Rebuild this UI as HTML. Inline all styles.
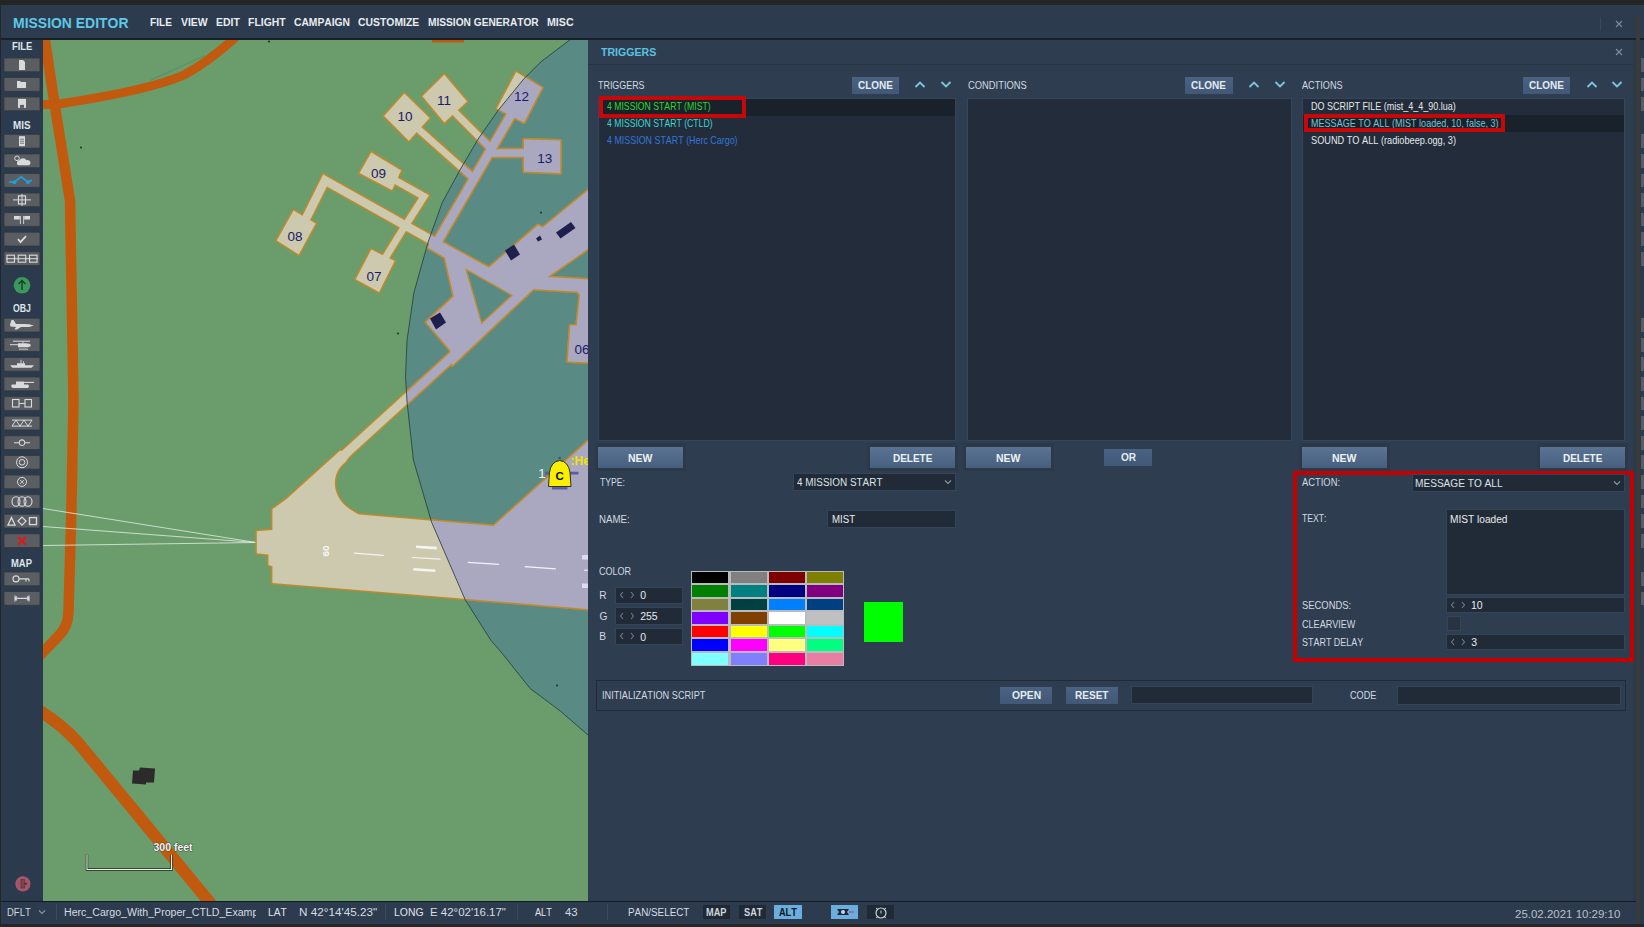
<!DOCTYPE html>
<html><head><meta charset="utf-8"><style>
html,body{margin:0;padding:0;width:1644px;height:927px;overflow:hidden;background:#2e3e50;}
body{position:relative;font-family:"Liberation Sans",sans-serif;}
.b{position:absolute;box-sizing:border-box;}
.t{position:absolute;white-space:pre;line-height:1;font-kerning:none;transform-origin:0 0;}
svg{display:block;}
</style></head><body>
<div class="b" style="left:0.00px;top:0.00px;width:1644.00px;height:5.00px;background:#252525;"></div>
<div class="b" style="left:0.00px;top:5.00px;width:1644.00px;height:32.50px;background:#2c3b4e;"></div>
<div class="b" style="left:0.00px;top:37.50px;width:1644.00px;height:2.00px;background:#18212b;"></div>
<div class="b" style="left:0.00px;top:39.50px;width:43.00px;height:861.50px;background:#2b3a4d;"></div>
<div class="b" style="left:588.00px;top:39.50px;width:1048.00px;height:861.50px;background:#2e3e50;"></div>
<div class="b" style="left:1632.50px;top:39.50px;width:11.50px;height:887.50px;background:#2c3a48;"></div>
<div class="b" style="left:1635.80px;top:16.00px;width:3.80px;height:911.00px;background:#383a3d;"></div>
<div class="b" style="left:0.00px;top:901.00px;width:1636.00px;height:1.00px;background:#141c25;"></div>
<div class="b" style="left:0.00px;top:902.00px;width:1636.00px;height:22.00px;background:#2c3b4e;"></div>
<div class="b" style="left:0.00px;top:924.00px;width:1644.00px;height:3.00px;background:#262626;"></div>
<div class="b" style="left:0.00px;top:5.00px;width:1.00px;height:918.50px;background:#22282e;"></div>
<span class="t" style="left:13.07px;top:17.00px;font-size:13.95px;color:#5ec8e6;font-weight:bold;">MISSION EDITOR</span>
<span class="t" style="left:149.52px;top:17.00px;font-size:11.05px;color:#e8ecf0;font-weight:bold;transform:scaleX(0.9138);">FILE</span>
<span class="t" style="left:180.53px;top:17.00px;font-size:11.05px;color:#e8ecf0;font-weight:bold;transform:scaleX(0.9451);">VIEW</span>
<span class="t" style="left:215.90px;top:17.00px;font-size:11.05px;color:#e8ecf0;font-weight:bold;transform:scaleX(0.9463);">EDIT</span>
<span class="t" style="left:248.10px;top:17.00px;font-size:11.05px;color:#e8ecf0;font-weight:bold;transform:scaleX(0.9456);">FLIGHT</span>
<span class="t" style="left:294.28px;top:17.00px;font-size:11.05px;color:#e8ecf0;font-weight:bold;transform:scaleX(0.9297);">CAMPAIGN</span>
<span class="t" style="left:358.07px;top:17.00px;font-size:11.05px;color:#e8ecf0;font-weight:bold;transform:scaleX(0.9413);">CUSTOMIZE</span>
<span class="t" style="left:428.12px;top:17.00px;font-size:11.05px;color:#e8ecf0;font-weight:bold;transform:scaleX(0.9202);">MISSION GENERATOR</span>
<span class="t" style="left:547.09px;top:17.00px;font-size:11.05px;color:#e8ecf0;font-weight:bold;transform:scaleX(0.9633);">MISC</span>
<div class="b" style="left:1600.00px;top:17.00px;width:1.00px;height:14.00px;background:#3a4a5c;"></div>
<svg class="b" style="left:1614px;top:19.3px" width="10" height="10"><path d="M2,2 L8,8 M8,2 L2,8" stroke="#7f8c9b" stroke-width="1.1"/></svg>
<svg class="b" style="left:1614px;top:46.8px" width="10" height="10"><path d="M2,2 L8,8 M8,2 L2,8" stroke="#7f8c9b" stroke-width="1.1"/></svg>
<svg class="b" style="left:0;top:0" width="43" height="901"><rect x="4" y="58.0" width="36" height="13.8" rx="1" fill="#5a5e63" stroke="#33373c" stroke-width="0.8"/><g transform="translate(22,64.9)"><path d="M-3,-5 h4 l2,2 v8 h-6z" fill="#d9dadb"/></g><rect x="4" y="77.5" width="36" height="13.8" rx="1" fill="#5a5e63" stroke="#33373c" stroke-width="0.8"/><g transform="translate(22,84.4)"><path d="M-5,-3.5 h3 l1,1 h5 v6 h-9z" fill="#d9dadb"/></g><rect x="4" y="97.0" width="36" height="13.8" rx="1" fill="#5a5e63" stroke="#33373c" stroke-width="0.8"/><g transform="translate(22,103.9)"><path d="M-4,-5 h8 v9 h-8z" fill="#d9dadb"/><rect x="-2" y="1" width="4" height="3" fill="#5a5e63"/></g><rect x="4" y="134.3" width="36" height="13.8" rx="1" fill="#5a5e63" stroke="#33373c" stroke-width="0.8"/><g transform="translate(22,141.2)"><path d="M-3,-5 h6 v10 h-6z" fill="#d9dadb"/><path d="M-2,-2 h4 M-2,0 h4 M-2,2 h4" stroke="#5a5e63" stroke-width="0.8"/></g><rect x="4" y="153.9" width="36" height="13.8" rx="1" fill="#5a5e63" stroke="#33373c" stroke-width="0.8"/><g transform="translate(22,160.8)"><circle cx="-5" cy="-2.5" r="2.3" fill="none" stroke="#d9dadb" stroke-width="1"/><path d="M-4,4.5 a2.8,2.8 0 0 1 1.5,-5 a4,4 0 0 1 7,0 a2.8,2.8 0 0 1 2.5,5z" fill="#d9dadb"/></g><rect x="4" y="173.5" width="36" height="13.8" rx="1" fill="#5a5e63" stroke="#33373c" stroke-width="0.8"/><g transform="translate(22,180.4)"><path d="M-13,1.6 L-7.6,1.8 L-1,-3.5 L6,1.8 L10,-0.4" fill="none" stroke="#1e9fd8" stroke-width="1.7"/><circle cx="-7.6" cy="1.8" r="2" fill="#1e9fd8"/><circle cx="6" cy="1.8" r="2" fill="#1e9fd8"/></g><rect x="4" y="193.0" width="36" height="13.8" rx="1" fill="#5a5e63" stroke="#33373c" stroke-width="0.8"/><g transform="translate(22,199.9)"><rect x="-3.5" y="-4" width="7" height="8" fill="none" stroke="#d9dadb" stroke-width="1.2"/><path d="M-9,0 h18 M0,-6 v12" stroke="#d9dadb" stroke-width="1"/></g><rect x="4" y="212.6" width="36" height="13.8" rx="1" fill="#5a5e63" stroke="#33373c" stroke-width="0.8"/><g transform="translate(22,219.5)"><path d="M-8,-3.5 h5.8 v3.5 h-5.8z M2.2,-3.5 h5.8 v3.5 h-5.8z" fill="#d9dadb"/><path d="M-1.6,-3.5 v8 M1.6,-3.5 v8" stroke="#d9dadb" stroke-width="0.9"/></g><rect x="4" y="232.2" width="36" height="13.8" rx="1" fill="#5a5e63" stroke="#33373c" stroke-width="0.8"/><g transform="translate(22,239.1)"><path d="M-4,0 L-1.5,3 L4,-3" fill="none" stroke="#d9dadb" stroke-width="1.8"/></g><rect x="4" y="251.8" width="36" height="13.8" rx="1" fill="#5a5e63" stroke="#33373c" stroke-width="0.8"/><g transform="translate(22,258.7)"><rect x="-15" y="-3.5" width="7.5" height="7" fill="none" stroke="#d9dadb" stroke-width="1.1"/><rect x="-3.75" y="-3.5" width="7.5" height="7" fill="none" stroke="#d9dadb" stroke-width="1.1"/><rect x="7.5" y="-3.5" width="7.5" height="7" fill="none" stroke="#d9dadb" stroke-width="1.1"/><path d="M-16,0 h32" stroke="#d9dadb" stroke-width="1"/></g><rect x="4" y="318.2" width="36" height="13.8" rx="1" fill="#5a5e63" stroke="#33373c" stroke-width="0.8"/><g transform="translate(22,325.1)"><path d="M-12,-0.5 L-10.5,-5 L-8.5,-5 L-6,-1 L3,-1.2 L7,-0.8 L12,0.5 L7,1.8 L-1,2 L-5,4.5 L-7.5,4.5 L-6,2 L-11.5,1.5z" fill="#d9dadb"/></g><rect x="4" y="337.8" width="36" height="13.8" rx="1" fill="#5a5e63" stroke="#33373c" stroke-width="0.8"/><g transform="translate(22,344.7)"><path d="M-9,-3.5 h17" stroke="#d9dadb" stroke-width="1"/><path d="M-12,0 h8" stroke="#d9dadb" stroke-width="1"/><path d="M-4,-1.5 h8 q4,0 5,2 q-1,2 -5,2 h-8z" fill="#d9dadb"/><path d="M-3,4.5 h9 M1,-3.5 v2" stroke="#d9dadb" stroke-width="0.9"/></g><rect x="4" y="357.4" width="36" height="13.8" rx="1" fill="#5a5e63" stroke="#33373c" stroke-width="0.8"/><g transform="translate(22,364.3)"><path d="M-12,1 h24 l-2.5,2.5 h-19z M-5,-1 h8 v2 h-8z" fill="#d9dadb"/><path d="M-1,-4.5 v3.5 M1.5,-3 v2" stroke="#d9dadb" stroke-width="0.9"/></g><rect x="4" y="377.0" width="36" height="13.8" rx="1" fill="#5a5e63" stroke="#33373c" stroke-width="0.8"/><g transform="translate(22,383.9)"><path d="M-10,0.5 h16 q2,1.5 0,3.5 h-15 q-3,-1.5 -1,-3.5z M-6,-2.5 h8 v3 h-8z" fill="#d9dadb"/><path d="M2,-1.5 h10" stroke="#d9dadb" stroke-width="1.1"/></g><rect x="4" y="396.6" width="36" height="13.8" rx="1" fill="#5a5e63" stroke="#33373c" stroke-width="0.8"/><g transform="translate(22,403.5)"><rect x="-9.5" y="-4" width="6.5" height="7.5" fill="none" stroke="#d9dadb" stroke-width="1.1"/><rect x="3" y="-4" width="6.5" height="7.5" fill="none" stroke="#d9dadb" stroke-width="1.1"/><path d="M-3,0 h6" stroke="#d9dadb" stroke-width="1"/></g><rect x="4" y="416.2" width="36" height="13.8" rx="1" fill="#5a5e63" stroke="#33373c" stroke-width="0.8"/><g transform="translate(22,423.1)"><path d="M-10,3 L-6,-3 L-2,3 L2,-3 L6,3 L10,-3 M-10,3 h20 M-10,-3 h20" fill="none" stroke="#d9dadb" stroke-width="1"/></g><rect x="4" y="435.8" width="36" height="13.8" rx="1" fill="#5a5e63" stroke="#33373c" stroke-width="0.8"/><g transform="translate(22,442.7)"><circle cx="0" cy="0" r="2.8" fill="none" stroke="#d9dadb" stroke-width="1.1"/><path d="M-8,0 h5 M3,0 h5" stroke="#d9dadb" stroke-width="1.1"/></g><rect x="4" y="455.4" width="36" height="13.8" rx="1" fill="#5a5e63" stroke="#33373c" stroke-width="0.8"/><g transform="translate(22,462.3)"><circle cx="0" cy="0" r="5.5" fill="none" stroke="#d9dadb" stroke-width="1"/><circle cx="0" cy="0" r="2.8" fill="none" stroke="#d9dadb" stroke-width="1"/></g><rect x="4" y="475.0" width="36" height="13.8" rx="1" fill="#5a5e63" stroke="#33373c" stroke-width="0.8"/><g transform="translate(22,481.9)"><circle cx="0" cy="0" r="4.5" fill="none" stroke="#d9dadb" stroke-width="1"/><path d="M-2,-2 L2,2 M2,-2 L-2,2" stroke="#d9dadb" stroke-width="0.9"/></g><rect x="4" y="494.6" width="36" height="13.8" rx="1" fill="#5a5e63" stroke="#33373c" stroke-width="0.8"/><g transform="translate(22,501.5)"><ellipse cx="-6" cy="0" rx="4" ry="4.8" fill="none" stroke="#d9dadb" stroke-width="1.1"/><ellipse cx="0" cy="0" rx="4" ry="4.8" fill="none" stroke="#d9dadb" stroke-width="1.1"/><ellipse cx="6" cy="0" rx="4" ry="4.8" fill="none" stroke="#d9dadb" stroke-width="1.1"/></g><rect x="4" y="514.2" width="36" height="13.8" rx="1" fill="#5a5e63" stroke="#33373c" stroke-width="0.8"/><g transform="translate(22,521.1)"><path d="M-14,4 L-10.5,-3.5 L-7,4z" fill="none" stroke="#d9dadb" stroke-width="1.3"/><path d="M0,-4 L4,0 L0,4 L-4,0z" fill="none" stroke="#d9dadb" stroke-width="1.3"/><rect x="7.5" y="-3.5" width="7" height="7" fill="none" stroke="#d9dadb" stroke-width="1.3"/></g><rect x="4" y="533.8" width="36" height="13.8" rx="1" fill="#5a5e63" stroke="#33373c" stroke-width="0.8"/><g transform="translate(22,540.7)"><path d="M-4,-4 L4,4 M4,-4 L-4,4" stroke="#e01818" stroke-width="2.2"/></g><rect x="4" y="572.0" width="36" height="13.8" rx="1" fill="#5a5e63" stroke="#33373c" stroke-width="0.8"/><g transform="translate(22,578.9)"><circle cx="-6" cy="0" r="3" fill="none" stroke="#d9dadb" stroke-width="1.1"/><path d="M-3,0 h10 M4,0 v2.5 M7,0 v2.5" stroke="#d9dadb" stroke-width="1.1"/></g><rect x="4" y="591.5" width="36" height="13.8" rx="1" fill="#5a5e63" stroke="#33373c" stroke-width="0.8"/><g transform="translate(22,598.4)"><path d="M-7,-3 v6 M7,-3 v6 M-7,0 h14 M-5,-2 l-2,2 l2,2 M5,-2 l2,2 l-2,2" fill="none" stroke="#d9dadb" stroke-width="1.1"/></g><circle cx="22" cy="285.3" r="8.3" fill="#3a9a5c"/><path d="M22,290 v-9 M18.5,284 l3.5,-3.5 l3.5,3.5" stroke="#1d3a28" stroke-width="1.4" fill="none"/><circle cx="22.9" cy="883.8" r="7.6" fill="#a8526a"/><circle cx="22.9" cy="883.8" r="6.6" fill="none" stroke="#9a6070" stroke-width="1"/><path d="M21,879.5 h3.5 v8.5 h-3.5z" fill="#7a4450" stroke="#5a3840" stroke-width="0.8"/><circle cx="25.8" cy="883.8" r="1" fill="#3a2a30"/></svg><span class="t" style="left:11.67px;top:42.00px;font-size:10.17px;color:#dfe4ea;font-weight:bold;transform:scaleX(0.9254);">FILE</span><span class="t" style="left:13.09px;top:121.00px;font-size:10.17px;color:#dfe4ea;font-weight:bold;transform:scaleX(0.9700);">MIS</span><span class="t" style="left:13.14px;top:304.00px;font-size:10.17px;color:#dfe4ea;font-weight:bold;transform:scaleX(0.8583);">OBJ</span><span class="t" style="left:11.37px;top:559.00px;font-size:10.17px;color:#dfe4ea;font-weight:bold;transform:scaleX(0.9267);">MAP</span>
<svg class="b" style="left:43px;top:39.5px" width="545" height="861.5" viewBox="43 39.5 545 861.5"><defs><clipPath id="circ"><polygon points="575.0,34.0 570.3,39.0 540.7,61.5 523.8,78.4 498.5,109.4 478.8,137.5 460.5,168.5 442.2,202.2 428.1,241.6 413.9,292.2 407.0,340.0 405.5,376.3 407.1,402.0 413.4,459.5 431.6,521.7 465.2,599.3 491.0,640.0 500.0,650.2 530.2,688.0 560.4,710.6 588.3,734.8 600.0,745.0 700.0,745.0 700.0,30.0"/></clipPath><clipPath id="hole0"><polygon points="467.6,270.8 510.4,295.0 482.1,321.0"/></clipPath></defs><rect x="0" y="0" width="700" height="927" fill="#6a9d6b"/><polygon points="575.0,34.0 570.3,39.0 540.7,61.5 523.8,78.4 498.5,109.4 478.8,137.5 460.5,168.5 442.2,202.2 428.1,241.6 413.9,292.2 407.0,340.0 405.5,376.3 407.1,402.0 413.4,459.5 431.6,521.7 465.2,599.3 491.0,640.0 500.0,650.2 530.2,688.0 560.4,710.6 588.3,734.8 600.0,745.0 700.0,745.0 700.0,30.0" fill="#598a84"/><g fill="none" stroke="#c15a0e" stroke-width="9" stroke-linejoin="round"><path d="M43.5,30 L54.5,103 L70,200 L73.5,400 L71.4,508 L68.5,612 Q68,625 60,634 L38,657" stroke-width="10.5"/><path d="M38,104 L56,104"/><path d="M55,104 Q150,90 185,74 Q211,60 243,30"/><path d="M36,708 Q62,724 78,742 L218,912" stroke-width="12"/></g><path d="M150,80 L205,55" stroke="#4c8a6c" stroke-width="0.8"/><rect x="432" y="39.5" width="32" height="2.5" fill="#c15a0e"/><g stroke="#e4ece4" stroke-width="0.8"><path d="M43,508 L256,542"/><path d="M43,526 L256,542"/><path d="M43,545 L256,542"/></g><path d="M404.4,93.1L429.5,117.5L408.8,140.2L384.2,115.6Z" fill="#c08a2c" stroke="#c08a2c" stroke-width="3" stroke-linejoin="round"/><path d="M444.3,74.2L467.0,100.9L444.3,122.1L422.5,95.7Z" fill="#c08a2c" stroke="#c08a2c" stroke-width="3" stroke-linejoin="round"/><path d="M516.2,71.6L542.0,87.2L524.0,122.0L496.8,107.9Z" fill="#c08a2c" stroke="#c08a2c" stroke-width="3" stroke-linejoin="round"/><path d="M524.0,139.0L560.2,140.0L560.2,172.6L524.0,171.0Z" fill="#c08a2c" stroke="#c08a2c" stroke-width="3" stroke-linejoin="round"/><path d="M371.3,151.9L401.0,170.0L392.0,189.4L359.6,172.6Z" fill="#c08a2c" stroke="#c08a2c" stroke-width="3" stroke-linejoin="round"/><path d="M293.6,210.0L315.6,223.0L298.8,254.0L276.8,239.9Z" fill="#c08a2c" stroke="#c08a2c" stroke-width="3" stroke-linejoin="round"/><path d="M371.3,249.0L394.6,260.6L379.0,291.6L355.8,278.7Z" fill="#c08a2c" stroke="#c08a2c" stroke-width="3" stroke-linejoin="round"/><path d="M431.2,237.6L444.1,242.5L488.6,267.6L537.9,224.7L542.8,227.1L600.0,180.0L600.0,240.0L547.6,276.5L600.0,279.7L600.0,287.0L575.1,291.0L533.0,288.6L452.2,365.0L450.1,349.5L426.3,321.7L453.8,295.9L444.9,257.0L428.0,247.3Z" fill="#c08a2c" stroke="#c08a2c" stroke-width="3" stroke-linejoin="round"/><path d="M575.1,289.0L580.0,294.2L576.7,325.0L570.3,325.0L567.8,361.0L600.0,362.3L600.0,286.5Z" fill="#c08a2c" stroke="#c08a2c" stroke-width="3" stroke-linejoin="round"/><path d="M256.8,530.7L272.4,529.4L272.4,508.7L286.6,498.4L340.0,450.3L352.0,452.0L345.0,461.9C331.0,472.0 328.0,500.0 359.0,513.9L493.7,525.5L600.0,430.0L600.0,609.4L272.4,582.5L272.4,565.7L268.5,564.4L268.5,554.0L256.8,552.7Z" fill="#c08a2c" stroke="#c08a2c" stroke-width="3" stroke-linejoin="round"/><polyline points="290.0,503.9 588.0,232.7" fill="none" stroke="#c08a2c" stroke-width="12.0" stroke-linecap="butt" stroke-linejoin="miter"/><polyline points="412.0,123.0 474.0,178.0" fill="none" stroke="#c08a2c" stroke-width="10.0" stroke-linecap="butt" stroke-linejoin="miter"/><polyline points="450.0,107.0 492.0,149.0" fill="none" stroke="#c08a2c" stroke-width="10.0" stroke-linecap="butt" stroke-linejoin="miter"/><polyline points="516.0,106.0 434.0,247.0" fill="none" stroke="#c08a2c" stroke-width="11.5" stroke-linecap="butt" stroke-linejoin="miter"/><polyline points="492.0,152.5 528.0,152.5" fill="none" stroke="#c08a2c" stroke-width="10.5" stroke-linecap="butt" stroke-linejoin="miter"/><polyline points="441.0,245.0 325.0,180.0 302.0,226.0" fill="none" stroke="#c08a2c" stroke-width="11.5" stroke-linecap="butt" stroke-linejoin="miter"/><polyline points="392.0,178.0 424.0,196.0 403.0,229.0" fill="none" stroke="#c08a2c" stroke-width="10.0" stroke-linecap="butt" stroke-linejoin="miter"/><polyline points="407.0,222.0 380.0,266.0" fill="none" stroke="#c08a2c" stroke-width="10.0" stroke-linecap="butt" stroke-linejoin="miter"/><polyline points="432.0,241.0 492.0,273.0" fill="none" stroke="#c08a2c" stroke-width="10.5" stroke-linecap="butt" stroke-linejoin="miter"/><path d="M404.4,93.1L429.5,117.5L408.8,140.2L384.2,115.6Z" fill="#cdc9ae"/><path d="M444.3,74.2L467.0,100.9L444.3,122.1L422.5,95.7Z" fill="#cdc9ae"/><path d="M516.2,71.6L542.0,87.2L524.0,122.0L496.8,107.9Z" fill="#cdc9ae"/><path d="M524.0,139.0L560.2,140.0L560.2,172.6L524.0,171.0Z" fill="#cdc9ae"/><path d="M371.3,151.9L401.0,170.0L392.0,189.4L359.6,172.6Z" fill="#cdc9ae"/><path d="M293.6,210.0L315.6,223.0L298.8,254.0L276.8,239.9Z" fill="#cdc9ae"/><path d="M371.3,249.0L394.6,260.6L379.0,291.6L355.8,278.7Z" fill="#cdc9ae"/><path d="M431.2,237.6L444.1,242.5L488.6,267.6L537.9,224.7L542.8,227.1L600.0,180.0L600.0,240.0L547.6,276.5L600.0,279.7L600.0,287.0L575.1,291.0L533.0,288.6L452.2,365.0L450.1,349.5L426.3,321.7L453.8,295.9L444.9,257.0L428.0,247.3Z" fill="#cdc9ae"/><path d="M575.1,289.0L580.0,294.2L576.7,325.0L570.3,325.0L567.8,361.0L600.0,362.3L600.0,286.5Z" fill="#cdc9ae"/><path d="M256.8,530.7L272.4,529.4L272.4,508.7L286.6,498.4L340.0,450.3L352.0,452.0L345.0,461.9C331.0,472.0 328.0,500.0 359.0,513.9L493.7,525.5L600.0,430.0L600.0,609.4L272.4,582.5L272.4,565.7L268.5,564.4L268.5,554.0L256.8,552.7Z" fill="#cdc9ae"/><polyline points="290.0,503.9 588.0,232.7" fill="none" stroke="#cdc9ae" stroke-width="9.0" stroke-linecap="butt" stroke-linejoin="miter"/><polyline points="412.0,123.0 474.0,178.0" fill="none" stroke="#cdc9ae" stroke-width="7.0" stroke-linecap="butt" stroke-linejoin="miter"/><polyline points="450.0,107.0 492.0,149.0" fill="none" stroke="#cdc9ae" stroke-width="7.0" stroke-linecap="butt" stroke-linejoin="miter"/><polyline points="516.0,106.0 434.0,247.0" fill="none" stroke="#cdc9ae" stroke-width="8.5" stroke-linecap="butt" stroke-linejoin="miter"/><polyline points="492.0,152.5 528.0,152.5" fill="none" stroke="#cdc9ae" stroke-width="7.5" stroke-linecap="butt" stroke-linejoin="miter"/><polyline points="441.0,245.0 325.0,180.0 302.0,226.0" fill="none" stroke="#cdc9ae" stroke-width="8.5" stroke-linecap="butt" stroke-linejoin="miter"/><polyline points="392.0,178.0 424.0,196.0 403.0,229.0" fill="none" stroke="#cdc9ae" stroke-width="7.0" stroke-linecap="butt" stroke-linejoin="miter"/><polyline points="407.0,222.0 380.0,266.0" fill="none" stroke="#cdc9ae" stroke-width="7.0" stroke-linecap="butt" stroke-linejoin="miter"/><polyline points="432.0,241.0 492.0,273.0" fill="none" stroke="#cdc9ae" stroke-width="7.5" stroke-linecap="butt" stroke-linejoin="miter"/><g clip-path="url(#circ)"><path d="M404.4,93.1L429.5,117.5L408.8,140.2L384.2,115.6Z" fill="#c08a2c" stroke="#c08a2c" stroke-width="3" stroke-linejoin="round"/><path d="M444.3,74.2L467.0,100.9L444.3,122.1L422.5,95.7Z" fill="#c08a2c" stroke="#c08a2c" stroke-width="3" stroke-linejoin="round"/><path d="M516.2,71.6L542.0,87.2L524.0,122.0L496.8,107.9Z" fill="#c08a2c" stroke="#c08a2c" stroke-width="3" stroke-linejoin="round"/><path d="M524.0,139.0L560.2,140.0L560.2,172.6L524.0,171.0Z" fill="#c08a2c" stroke="#c08a2c" stroke-width="3" stroke-linejoin="round"/><path d="M371.3,151.9L401.0,170.0L392.0,189.4L359.6,172.6Z" fill="#c08a2c" stroke="#c08a2c" stroke-width="3" stroke-linejoin="round"/><path d="M293.6,210.0L315.6,223.0L298.8,254.0L276.8,239.9Z" fill="#c08a2c" stroke="#c08a2c" stroke-width="3" stroke-linejoin="round"/><path d="M371.3,249.0L394.6,260.6L379.0,291.6L355.8,278.7Z" fill="#c08a2c" stroke="#c08a2c" stroke-width="3" stroke-linejoin="round"/><path d="M431.2,237.6L444.1,242.5L488.6,267.6L537.9,224.7L542.8,227.1L600.0,180.0L600.0,240.0L547.6,276.5L600.0,279.7L600.0,287.0L575.1,291.0L533.0,288.6L452.2,365.0L450.1,349.5L426.3,321.7L453.8,295.9L444.9,257.0L428.0,247.3Z" fill="#c08a2c" stroke="#c08a2c" stroke-width="3" stroke-linejoin="round"/><path d="M575.1,289.0L580.0,294.2L576.7,325.0L570.3,325.0L567.8,361.0L600.0,362.3L600.0,286.5Z" fill="#c08a2c" stroke="#c08a2c" stroke-width="3" stroke-linejoin="round"/><path d="M256.8,530.7L272.4,529.4L272.4,508.7L286.6,498.4L340.0,450.3L352.0,452.0L345.0,461.9C331.0,472.0 328.0,500.0 359.0,513.9L493.7,525.5L600.0,430.0L600.0,609.4L272.4,582.5L272.4,565.7L268.5,564.4L268.5,554.0L256.8,552.7Z" fill="#c08a2c" stroke="#c08a2c" stroke-width="3" stroke-linejoin="round"/><polyline points="290.0,503.9 588.0,232.7" fill="none" stroke="#c08a2c" stroke-width="12.0" stroke-linecap="butt" stroke-linejoin="miter"/><polyline points="412.0,123.0 474.0,178.0" fill="none" stroke="#c08a2c" stroke-width="10.0" stroke-linecap="butt" stroke-linejoin="miter"/><polyline points="450.0,107.0 492.0,149.0" fill="none" stroke="#c08a2c" stroke-width="10.0" stroke-linecap="butt" stroke-linejoin="miter"/><polyline points="516.0,106.0 434.0,247.0" fill="none" stroke="#c08a2c" stroke-width="11.5" stroke-linecap="butt" stroke-linejoin="miter"/><polyline points="492.0,152.5 528.0,152.5" fill="none" stroke="#c08a2c" stroke-width="10.5" stroke-linecap="butt" stroke-linejoin="miter"/><polyline points="441.0,245.0 325.0,180.0 302.0,226.0" fill="none" stroke="#c08a2c" stroke-width="11.5" stroke-linecap="butt" stroke-linejoin="miter"/><polyline points="392.0,178.0 424.0,196.0 403.0,229.0" fill="none" stroke="#c08a2c" stroke-width="10.0" stroke-linecap="butt" stroke-linejoin="miter"/><polyline points="407.0,222.0 380.0,266.0" fill="none" stroke="#c08a2c" stroke-width="10.0" stroke-linecap="butt" stroke-linejoin="miter"/><polyline points="432.0,241.0 492.0,273.0" fill="none" stroke="#c08a2c" stroke-width="10.5" stroke-linecap="butt" stroke-linejoin="miter"/><path d="M404.4,93.1L429.5,117.5L408.8,140.2L384.2,115.6Z" fill="#aaa8c1"/><path d="M444.3,74.2L467.0,100.9L444.3,122.1L422.5,95.7Z" fill="#aaa8c1"/><path d="M516.2,71.6L542.0,87.2L524.0,122.0L496.8,107.9Z" fill="#aaa8c1"/><path d="M524.0,139.0L560.2,140.0L560.2,172.6L524.0,171.0Z" fill="#aaa8c1"/><path d="M371.3,151.9L401.0,170.0L392.0,189.4L359.6,172.6Z" fill="#aaa8c1"/><path d="M293.6,210.0L315.6,223.0L298.8,254.0L276.8,239.9Z" fill="#aaa8c1"/><path d="M371.3,249.0L394.6,260.6L379.0,291.6L355.8,278.7Z" fill="#aaa8c1"/><path d="M431.2,237.6L444.1,242.5L488.6,267.6L537.9,224.7L542.8,227.1L600.0,180.0L600.0,240.0L547.6,276.5L600.0,279.7L600.0,287.0L575.1,291.0L533.0,288.6L452.2,365.0L450.1,349.5L426.3,321.7L453.8,295.9L444.9,257.0L428.0,247.3Z" fill="#aaa8c1"/><path d="M575.1,289.0L580.0,294.2L576.7,325.0L570.3,325.0L567.8,361.0L600.0,362.3L600.0,286.5Z" fill="#aaa8c1"/><path d="M256.8,530.7L272.4,529.4L272.4,508.7L286.6,498.4L340.0,450.3L352.0,452.0L345.0,461.9C331.0,472.0 328.0,500.0 359.0,513.9L493.7,525.5L600.0,430.0L600.0,609.4L272.4,582.5L272.4,565.7L268.5,564.4L268.5,554.0L256.8,552.7Z" fill="#aaa8c1"/><polyline points="290.0,503.9 588.0,232.7" fill="none" stroke="#aaa8c1" stroke-width="9.0" stroke-linecap="butt" stroke-linejoin="miter"/><polyline points="412.0,123.0 474.0,178.0" fill="none" stroke="#aaa8c1" stroke-width="7.0" stroke-linecap="butt" stroke-linejoin="miter"/><polyline points="450.0,107.0 492.0,149.0" fill="none" stroke="#aaa8c1" stroke-width="7.0" stroke-linecap="butt" stroke-linejoin="miter"/><polyline points="516.0,106.0 434.0,247.0" fill="none" stroke="#aaa8c1" stroke-width="8.5" stroke-linecap="butt" stroke-linejoin="miter"/><polyline points="492.0,152.5 528.0,152.5" fill="none" stroke="#aaa8c1" stroke-width="7.5" stroke-linecap="butt" stroke-linejoin="miter"/><polyline points="441.0,245.0 325.0,180.0 302.0,226.0" fill="none" stroke="#aaa8c1" stroke-width="8.5" stroke-linecap="butt" stroke-linejoin="miter"/><polyline points="392.0,178.0 424.0,196.0 403.0,229.0" fill="none" stroke="#aaa8c1" stroke-width="7.0" stroke-linecap="butt" stroke-linejoin="miter"/><polyline points="407.0,222.0 380.0,266.0" fill="none" stroke="#aaa8c1" stroke-width="7.0" stroke-linecap="butt" stroke-linejoin="miter"/><polyline points="432.0,241.0 492.0,273.0" fill="none" stroke="#aaa8c1" stroke-width="7.5" stroke-linecap="butt" stroke-linejoin="miter"/></g><path d="M467.6,270.8 L510.4,295.0 L482.1,321.0Z" fill="none" stroke="#c08a2c" stroke-width="3"/><g clip-path="url(#hole0)"><rect x="0" y="0" width="700" height="927" fill="#6a9d6b"/><polygon points="575.0,34.0 570.3,39.0 540.7,61.5 523.8,78.4 498.5,109.4 478.8,137.5 460.5,168.5 442.2,202.2 428.1,241.6 413.9,292.2 407.0,340.0 405.5,376.3 407.1,402.0 413.4,459.5 431.6,521.7 465.2,599.3 491.0,640.0 500.0,650.2 530.2,688.0 560.4,710.6 588.3,734.8 600.0,745.0 700.0,745.0 700.0,30.0" fill="#598a84"/></g><polyline points="575.0,34.0 570.3,39.0 540.7,61.5 523.8,78.4 498.5,109.4 478.8,137.5 460.5,168.5 442.2,202.2 428.1,241.6 413.9,292.2 407.0,340.0 405.5,376.3 407.1,402.0 413.4,459.5 431.6,521.7 465.2,599.3 491.0,640.0 500.0,650.2 530.2,688.0 560.4,710.6 588.3,734.8 600.0,745.0" fill="none" stroke="#1f3d3a" stroke-width="0.8"/><g stroke="#f4f4f4" stroke-linecap="butt"><path d="M354.0,552.7 L383.7,554.8" stroke-width="1.2"/><path d="M416.0,546.3 L436.7,547.6" stroke-width="2.6"/><path d="M412.0,557.0 L440.6,558.7" stroke-width="1.2"/><path d="M413.4,568.8 L435.4,570.2" stroke-width="2.6"/><path d="M467.8,561.8 L498.9,563.9" stroke-width="1.2"/><path d="M524.8,566.2 L555.8,568.3" stroke-width="1.2"/></g><rect x="582" y="554.5" width="8" height="4.5" fill="#dcdcf0"/><rect x="582" y="583" width="8" height="4.5" fill="#dcdcf0"/><rect x="584" y="569" width="4" height="1.5" fill="#dcdcf0"/><text x="0" y="0" transform="translate(323,545) rotate(90)" font-family="Liberation Sans" font-weight="bold" font-size="9" fill="#f8f8f8" textLength="11" lengthAdjust="spacingAndGlyphs">09</text><g fill="#1f1f4e"><path d="M430,318 L440,312 L446,322 L436,329z"/><path d="M505,250 L514,244 L520,254 L511,260z"/><path d="M536,238 L540,235 L542,239 L538,241z"/><path d="M556,232 L571,221.5 L575.5,227.5 L560.5,238z"/></g><g font-family="Liberation Sans" font-size="13.5" fill="#1c1a6a"><text x="405.0" y="120.5" text-anchor="middle">10</text><text x="444.0" y="104.5" text-anchor="middle">11</text><text x="521.5" y="100.5" text-anchor="middle">12</text><text x="544.7" y="162.5" text-anchor="middle">13</text><text x="378.5" y="177.0" text-anchor="middle">09</text><text x="295.0" y="240.0" text-anchor="middle">08</text><text x="374.0" y="280.0" text-anchor="middle">07</text><text x="582.0" y="353.5" text-anchor="middle">06</text></g><circle cx="81" cy="147" r="1.1" fill="#233a23"/><circle cx="269" cy="41" r="1.1" fill="#233a23"/><circle cx="398" cy="333" r="1.1" fill="#233a23"/><circle cx="541" cy="212" r="1.1" fill="#233a23"/><circle cx="557" cy="685" r="1.1" fill="#233a23"/><path d="M133,770 L139,770 L140,767 L155,768 L154,782 L146,782 L146,784 L132,783z" fill="#2b2b2b"/><path d="M87,854 V869 H171.5 V854" fill="none" stroke="#1a2a1a" stroke-width="2.4"/><path d="M87,854 V869 H171.5 V854" fill="none" stroke="#f0f0f0" stroke-width="1.1"/><text x="153.5" y="850" font-family="Liberation Sans" font-size="10.5" font-weight="bold" fill="#f4f4f4" style="paint-order:stroke" stroke="#3a4a3a" stroke-width="1">300 feet</text><path d="M545,472.6 H578.5" stroke="#5c5ca2" stroke-width="2.6"/><circle cx="559.7" cy="457.5" r="1.3" fill="#4a4a8a"/><path d="M552,487.8 H567.5" stroke="#5c5ca2" stroke-width="2.4"/><path d="M548.5,486 L549.5,472 Q551,461 559.7,460 Q568.5,461 570,472 L571,486z" fill="#f8f000" stroke="#1e1e10" stroke-width="0.9"/><text x="559.7" y="479" text-anchor="middle" font-family="Liberation Sans" font-weight="bold" font-size="11.5" fill="#111">C</text><text x="538.3" y="477.3" font-family="Liberation Sans" font-size="13" fill="#f4f4f4">1</text><text x="570.5" y="464" font-family="Liberation Sans" font-weight="bold" font-size="12" fill="#f0e400">:He</text></svg>
<div class="b" style="left:588.00px;top:63.50px;width:1044.50px;height:1.00px;background:#273543;"></div>
<span class="t" style="left:601.18px;top:47.00px;font-size:11.05px;color:#5ec0e0;font-weight:bold;transform:scaleX(0.9574);">TRIGGERS</span>
<span class="t" style="left:597.80px;top:81.00px;font-size:10.17px;color:#d3d9e0;transform:scaleX(0.8772);">TRIGGERS</span>
<span class="t" style="left:967.52px;top:81.00px;font-size:10.17px;color:#d3d9e0;transform:scaleX(0.9223);">CONDITIONS</span>
<span class="t" style="left:1301.98px;top:81.00px;font-size:10.17px;color:#d3d9e0;transform:scaleX(0.9008);">ACTIONS</span>
<div class="b" style="left:852.00px;top:76.80px;width:47.00px;height:16.80px;background:linear-gradient(#4a6383,#415876);"></div>
<span class="t" style="left:858.09px;top:81.00px;font-size:10.47px;color:#e6ebf0;font-weight:bold;transform:scaleX(0.9500);">CLONE</span>
<svg class="b" style="left:914.0px;top:80.0px" width="12" height="9"><path d="M1.5,7 L6,2.5 L10.5,7" fill="none" stroke="#7cc6df" stroke-width="1.8"/></svg>
<svg class="b" style="left:939.8px;top:80.0px" width="12" height="9"><path d="M1.5,2 L6,6.5 L10.5,2" fill="none" stroke="#7cc6df" stroke-width="1.8"/></svg>
<div class="b" style="left:1185.00px;top:76.80px;width:47.50px;height:16.80px;background:linear-gradient(#4a6383,#415876);"></div>
<span class="t" style="left:1191.34px;top:81.00px;font-size:10.47px;color:#e6ebf0;font-weight:bold;transform:scaleX(0.9500);">CLONE</span>
<svg class="b" style="left:1248.0px;top:80.0px" width="12" height="9"><path d="M1.5,7 L6,2.5 L10.5,7" fill="none" stroke="#7cc6df" stroke-width="1.8"/></svg>
<svg class="b" style="left:1274.3px;top:80.0px" width="12" height="9"><path d="M1.5,2 L6,6.5 L10.5,2" fill="none" stroke="#7cc6df" stroke-width="1.8"/></svg>
<div class="b" style="left:1522.70px;top:76.80px;width:47.00px;height:16.80px;background:linear-gradient(#4a6383,#415876);"></div>
<span class="t" style="left:1528.79px;top:81.00px;font-size:10.47px;color:#e6ebf0;font-weight:bold;transform:scaleX(0.9500);">CLONE</span>
<svg class="b" style="left:1585.5px;top:80.0px" width="12" height="9"><path d="M1.5,7 L6,2.5 L10.5,7" fill="none" stroke="#7cc6df" stroke-width="1.8"/></svg>
<svg class="b" style="left:1610.7px;top:80.0px" width="12" height="9"><path d="M1.5,2 L6,6.5 L10.5,2" fill="none" stroke="#7cc6df" stroke-width="1.8"/></svg>
<div class="b" style="left:597.50px;top:97.50px;width:358.10px;height:343.50px;background:#34465a;"></div>
<div class="b" style="left:598.50px;top:98.50px;width:356.10px;height:341.50px;background:#222c3a;"></div>
<div class="b" style="left:966.50px;top:97.50px;width:325.00px;height:343.50px;background:#34465a;"></div>
<div class="b" style="left:967.50px;top:98.50px;width:323.00px;height:341.50px;background:#222c3a;"></div>
<div class="b" style="left:1302.00px;top:97.50px;width:323.00px;height:343.50px;background:#34465a;"></div>
<div class="b" style="left:1303.00px;top:98.50px;width:321.00px;height:341.50px;background:#222c3a;"></div>
<div class="b" style="left:598.50px;top:99.00px;width:356.10px;height:17.00px;background:#19212a;"></div>
<div class="b" style="left:1303.00px;top:114.80px;width:321.00px;height:17.50px;background:#19212a;"></div>
<span class="t" style="left:606.80px;top:102.00px;font-size:10.03px;color:#2fd62f;transform:scaleX(0.8660);">4 MISSION START (MIST)</span>
<span class="t" style="left:606.80px;top:119.00px;font-size:10.03px;color:#3fd4d0;transform:scaleX(0.8665);">4 MISSION START (CTLD)</span>
<span class="t" style="left:606.80px;top:136.00px;font-size:10.03px;color:#3277d8;transform:scaleX(0.8888);">4 MISSION START (Herc Cargo)</span>
<div class="b" style="left:599px;top:96px;width:147px;height:22px;border:4px solid #c80808;"></div>
<span class="t" style="left:1310.96px;top:102.00px;font-size:10.03px;color:#e4e8ec;transform:scaleX(0.8964);">DO SCRIPT FILE (mist_4_4_90.lua)</span>
<span class="t" style="left:1310.96px;top:119.00px;font-size:10.03px;color:#74c4d6;transform:scaleX(0.9033);">MESSAGE TO ALL (MIST loaded, 10, false, 3)</span>
<span class="t" style="left:1311.28px;top:136.00px;font-size:10.03px;color:#e4e8ec;transform:scaleX(0.9171);">SOUND TO ALL (radiobeep.ogg, 3)</span>
<div class="b" style="left:1304px;top:114px;width:201px;height:18px;border:4px solid #c80808;"></div>
<div class="b" style="left:595.00px;top:442.50px;width:90.50px;height:28.00px;background:#2b3949;"></div>
<div class="b" style="left:598.00px;top:447.00px;width:84.50px;height:20.50px;background:linear-gradient(#5a7393,#48607f);"></div>
<span class="t" style="left:627.70px;top:453.00px;font-size:10.76px;color:#eef2f5;font-weight:bold;transform:scaleX(0.9728);">NEW</span>
<div class="b" style="left:867.00px;top:442.50px;width:91.00px;height:28.00px;background:#2b3949;"></div>
<div class="b" style="left:870.00px;top:447.00px;width:85.00px;height:20.50px;background:linear-gradient(#5a7393,#48607f);"></div>
<span class="t" style="left:892.68px;top:453.00px;font-size:10.76px;color:#eef2f5;font-weight:bold;transform:scaleX(0.9276);">DELETE</span>
<div class="b" style="left:963.40px;top:442.50px;width:90.80px;height:28.00px;background:#2b3949;"></div>
<div class="b" style="left:966.40px;top:447.00px;width:84.80px;height:20.50px;background:linear-gradient(#5a7393,#48607f);"></div>
<span class="t" style="left:996.25px;top:453.00px;font-size:10.76px;color:#eef2f5;font-weight:bold;transform:scaleX(0.9728);">NEW</span>
<div class="b" style="left:1104.40px;top:449.00px;width:47.60px;height:17.00px;background:linear-gradient(#4a6383,#415876);"></div>
<span class="t" style="left:1120.54px;top:453.00px;font-size:10.47px;color:#e6ebf0;font-weight:bold;transform:scaleX(0.9632);">OR</span>
<div class="b" style="left:1299.00px;top:442.50px;width:90.80px;height:28.00px;background:#2b3949;"></div>
<div class="b" style="left:1302.00px;top:447.00px;width:84.80px;height:20.50px;background:linear-gradient(#5a7393,#48607f);"></div>
<span class="t" style="left:1331.85px;top:453.00px;font-size:10.76px;color:#eef2f5;font-weight:bold;transform:scaleX(0.9728);">NEW</span>
<div class="b" style="left:1537.20px;top:442.50px;width:90.80px;height:28.00px;background:#2b3949;"></div>
<div class="b" style="left:1540.20px;top:447.00px;width:84.80px;height:20.50px;background:linear-gradient(#5a7393,#48607f);"></div>
<span class="t" style="left:1562.78px;top:453.00px;font-size:10.76px;color:#eef2f5;font-weight:bold;transform:scaleX(0.9276);">DELETE</span>
<span class="t" style="left:600.21px;top:478.00px;font-size:10.17px;color:#d3d9e0;transform:scaleX(0.8498);">TYPE:</span>
<div class="b" style="left:792.70px;top:472.50px;width:162.90px;height:18.50px;background:#34455a;"></div>
<div class="b" style="left:793.70px;top:473.50px;width:160.90px;height:16.50px;background:#212b38;"></div>
<span class="t" style="left:797.27px;top:477.00px;font-size:11.05px;color:#dde2e8;transform:scaleX(0.8982);">4 MISSION START</span>
<svg class="b" style="left:943.5px;top:479.0px" width="8" height="6"><path d="M1,1.5 L4,4.5 L7,1.5" fill="none" stroke="#8a97a5" stroke-width="1.1"/></svg>
<span class="t" style="left:599.21px;top:515.00px;font-size:10.17px;color:#d3d9e0;transform:scaleX(0.9521);">NAME:</span>
<div class="b" style="left:826.60px;top:509.50px;width:129.60px;height:18.00px;background:#34455a;"></div>
<div class="b" style="left:827.60px;top:510.50px;width:127.60px;height:16.00px;background:#212b38;"></div>
<span class="t" style="left:831.81px;top:515.00px;font-size:10.47px;color:#e8ecf0;transform:scaleX(0.9205);">MIST</span>
<span class="t" style="left:599.24px;top:567.00px;font-size:10.17px;color:#d3d9e0;transform:scaleX(0.8894);">COLOR</span>
<span class="t" style="left:599.17px;top:591.00px;font-size:10.17px;color:#d3d9e0;">R</span>
<div class="b" style="left:614.90px;top:586.50px;width:68.00px;height:17.50px;background:#34455a;"></div>
<div class="b" style="left:615.90px;top:587.50px;width:66.00px;height:15.50px;background:#212b38;"></div>
<svg class="b" style="left:619.4px;top:590.2px" width="18" height="10"><path d="M4,2 L1.5,5 L4,8 M12,2 L14.5,5 L12,8" fill="none" stroke="#6f7c8b" stroke-width="1.1"/></svg>
<span class="t" style="left:640.29px;top:591.00px;font-size:10.47px;color:#e6eaee;">0</span>
<span class="t" style="left:599.49px;top:612.00px;font-size:10.17px;color:#d3d9e0;">G</span>
<div class="b" style="left:614.90px;top:607.00px;width:68.00px;height:18.00px;background:#34455a;"></div>
<div class="b" style="left:615.90px;top:608.00px;width:66.00px;height:16.00px;background:#212b38;"></div>
<svg class="b" style="left:619.4px;top:611.0px" width="18" height="10"><path d="M4,2 L1.5,5 L4,8 M12,2 L14.5,5 L12,8" fill="none" stroke="#6f7c8b" stroke-width="1.1"/></svg>
<span class="t" style="left:640.17px;top:612.00px;font-size:10.47px;color:#e6eaee;">255</span>
<span class="t" style="left:599.17px;top:632.00px;font-size:10.17px;color:#d3d9e0;">B</span>
<div class="b" style="left:614.90px;top:627.80px;width:68.00px;height:17.20px;background:#34455a;"></div>
<div class="b" style="left:615.90px;top:628.80px;width:66.00px;height:15.20px;background:#212b38;"></div>
<svg class="b" style="left:619.4px;top:631.4px" width="18" height="10"><path d="M4,2 L1.5,5 L4,8 M12,2 L14.5,5 L12,8" fill="none" stroke="#6f7c8b" stroke-width="1.1"/></svg>
<span class="t" style="left:640.29px;top:633.00px;font-size:10.47px;color:#e6eaee;">0</span>
<div class="b" style="left:691.20px;top:570.50px;width:153.20px;height:95.06px;background:#b9bcbf;"></div>
<div class="b" style="left:692.20px;top:571.50px;width:36.30px;height:11.58px;background:#000000;"></div>
<div class="b" style="left:730.50px;top:571.50px;width:36.30px;height:11.58px;background:#808080;"></div>
<div class="b" style="left:768.80px;top:571.50px;width:36.30px;height:11.58px;background:#800000;"></div>
<div class="b" style="left:807.10px;top:571.50px;width:36.30px;height:11.58px;background:#808000;"></div>
<div class="b" style="left:692.20px;top:585.08px;width:36.30px;height:11.58px;background:#008000;"></div>
<div class="b" style="left:730.50px;top:585.08px;width:36.30px;height:11.58px;background:#008080;"></div>
<div class="b" style="left:768.80px;top:585.08px;width:36.30px;height:11.58px;background:#000080;"></div>
<div class="b" style="left:807.10px;top:585.08px;width:36.30px;height:11.58px;background:#800080;"></div>
<div class="b" style="left:692.20px;top:598.66px;width:36.30px;height:11.58px;background:#808040;"></div>
<div class="b" style="left:730.50px;top:598.66px;width:36.30px;height:11.58px;background:#004040;"></div>
<div class="b" style="left:768.80px;top:598.66px;width:36.30px;height:11.58px;background:#0080ff;"></div>
<div class="b" style="left:807.10px;top:598.66px;width:36.30px;height:11.58px;background:#004080;"></div>
<div class="b" style="left:692.20px;top:612.24px;width:36.30px;height:11.58px;background:#8000ff;"></div>
<div class="b" style="left:730.50px;top:612.24px;width:36.30px;height:11.58px;background:#804000;"></div>
<div class="b" style="left:768.80px;top:612.24px;width:36.30px;height:11.58px;background:#ffffff;"></div>
<div class="b" style="left:807.10px;top:612.24px;width:36.30px;height:11.58px;background:#c0c0c0;"></div>
<div class="b" style="left:692.20px;top:625.82px;width:36.30px;height:11.58px;background:#ff0000;"></div>
<div class="b" style="left:730.50px;top:625.82px;width:36.30px;height:11.58px;background:#ffff00;"></div>
<div class="b" style="left:768.80px;top:625.82px;width:36.30px;height:11.58px;background:#00ff00;"></div>
<div class="b" style="left:807.10px;top:625.82px;width:36.30px;height:11.58px;background:#00ffff;"></div>
<div class="b" style="left:692.20px;top:639.40px;width:36.30px;height:11.58px;background:#0000ff;"></div>
<div class="b" style="left:730.50px;top:639.40px;width:36.30px;height:11.58px;background:#ff00ff;"></div>
<div class="b" style="left:768.80px;top:639.40px;width:36.30px;height:11.58px;background:#ffff80;"></div>
<div class="b" style="left:807.10px;top:639.40px;width:36.30px;height:11.58px;background:#00ff80;"></div>
<div class="b" style="left:692.20px;top:652.98px;width:36.30px;height:11.58px;background:#80ffff;"></div>
<div class="b" style="left:730.50px;top:652.98px;width:36.30px;height:11.58px;background:#8080ff;"></div>
<div class="b" style="left:768.80px;top:652.98px;width:36.30px;height:11.58px;background:#ff0080;"></div>
<div class="b" style="left:807.10px;top:652.98px;width:36.30px;height:11.58px;background:#e87ea2;"></div>
<div class="b" style="left:864.00px;top:602.00px;width:38.60px;height:40.30px;background:#00ff00;"></div>
<div class="b" style="left:1292.7px;top:470.7px;width:341.6px;height:191.3px;border:4px solid #c40000;"></div>
<span class="t" style="left:1301.98px;top:478.00px;font-size:10.17px;color:#d3d9e0;transform:scaleX(0.9227);">ACTION:</span>
<div class="b" style="left:1411.60px;top:474.00px;width:213.40px;height:18.00px;background:#34455a;"></div>
<div class="b" style="left:1412.60px;top:475.00px;width:211.40px;height:16.00px;background:#212b38;"></div>
<span class="t" style="left:1415.17px;top:478.00px;font-size:10.76px;color:#dde2e8;transform:scaleX(0.9391);">MESSAGE TO ALL</span>
<svg class="b" style="left:1612.5px;top:479.5px" width="8" height="6"><path d="M1,1.5 L4,4.5 L7,1.5" fill="none" stroke="#8a97a5" stroke-width="1.1"/></svg>
<span class="t" style="left:1301.81px;top:514.00px;font-size:10.17px;color:#d3d9e0;transform:scaleX(0.8492);">TEXT:</span>
<div class="b" style="left:1445.50px;top:509.00px;width:179.50px;height:85.70px;background:#34455a;"></div>
<div class="b" style="left:1446.50px;top:510.00px;width:177.50px;height:83.70px;background:#212b38;"></div>
<span class="t" style="left:1449.57px;top:515.00px;font-size:10.47px;color:#e8ecf0;transform:scaleX(0.9689);">MIST loaded</span>
<span class="t" style="left:1301.57px;top:601.00px;font-size:10.17px;color:#d3d9e0;transform:scaleX(0.9275);">SECONDS:</span>
<div class="b" style="left:1445.50px;top:596.50px;width:179.50px;height:16.30px;background:#34455a;"></div>
<div class="b" style="left:1446.50px;top:597.50px;width:177.50px;height:14.30px;background:#212b38;"></div>
<svg class="b" style="left:1450.0px;top:599.6px" width="18" height="10"><path d="M4,2 L1.5,5 L4,8 M12,2 L14.5,5 L12,8" fill="none" stroke="#6f7c8b" stroke-width="1.1"/></svg>
<span class="t" style="left:1470.90px;top:601.00px;font-size:10.47px;color:#e6eaee;">10</span>
<span class="t" style="left:1301.54px;top:620.00px;font-size:10.17px;color:#d3d9e0;transform:scaleX(0.8926);">CLEARVIEW</span>
<div class="b" style="left:1446.50px;top:615.50px;width:14.50px;height:15.50px;background:#34455a;"></div>
<div class="b" style="left:1447.50px;top:616.50px;width:12.50px;height:13.50px;background:#273444;"></div>
<span class="t" style="left:1301.59px;top:638.00px;font-size:10.17px;color:#d3d9e0;transform:scaleX(0.8815);">START DELAY</span>
<div class="b" style="left:1445.50px;top:633.70px;width:179.50px;height:16.80px;background:#34455a;"></div>
<div class="b" style="left:1446.50px;top:634.70px;width:177.50px;height:14.80px;background:#212b38;"></div>
<svg class="b" style="left:1450.0px;top:637.1px" width="18" height="10"><path d="M4,2 L1.5,5 L4,8 M12,2 L14.5,5 L12,8" fill="none" stroke="#6f7c8b" stroke-width="1.1"/></svg>
<span class="t" style="left:1471.30px;top:638.00px;font-size:10.47px;color:#e6eaee;">3</span>
<div class="b" style="left:596.4px;top:679.5px;width:1030px;height:31.5px;border:1px solid #1f2b38;"></div>
<span class="t" style="left:601.65px;top:691.00px;font-size:10.17px;color:#d3d9e0;transform:scaleX(0.9024);">INITIALIZATION SCRIPT</span>
<div class="b" style="left:999.90px;top:687.00px;width:52.10px;height:16.50px;background:linear-gradient(#4a6383,#415876);"></div>
<span class="t" style="left:1011.53px;top:691.00px;font-size:10.47px;color:#e6ebf0;font-weight:bold;transform:scaleX(0.9816);">OPEN</span>
<div class="b" style="left:1065.50px;top:687.00px;width:52.30px;height:16.50px;background:linear-gradient(#4a6383,#415876);"></div>
<span class="t" style="left:1074.63px;top:691.00px;font-size:10.47px;color:#e6ebf0;font-weight:bold;transform:scaleX(0.9596);">RESET</span>
<div class="b" style="left:1130.70px;top:686.40px;width:181.90px;height:18.10px;background:#34455a;"></div>
<div class="b" style="left:1131.70px;top:687.40px;width:179.90px;height:16.10px;background:#212b38;"></div>
<span class="t" style="left:1350.13px;top:691.00px;font-size:10.17px;color:#d3d9e0;transform:scaleX(0.9001);">CODE</span>
<div class="b" style="left:1397.40px;top:686.40px;width:223.90px;height:18.20px;background:#34455a;"></div>
<div class="b" style="left:1398.40px;top:687.40px;width:221.90px;height:16.20px;background:#212b38;"></div>
<div class="b" style="left:1640.50px;top:58.00px;width:3.50px;height:13.80px;background:#595c60;"></div>
<div class="b" style="left:1640.50px;top:77.50px;width:3.50px;height:13.80px;background:#595c60;"></div>
<div class="b" style="left:1640.50px;top:97.00px;width:3.50px;height:13.80px;background:#595c60;"></div>
<div class="b" style="left:1640.50px;top:134.30px;width:3.50px;height:13.80px;background:#595c60;"></div>
<div class="b" style="left:1640.50px;top:153.90px;width:3.50px;height:13.80px;background:#595c60;"></div>
<div class="b" style="left:1640.50px;top:173.50px;width:3.50px;height:13.80px;background:#595c60;"></div>
<div class="b" style="left:1640.50px;top:193.00px;width:3.50px;height:13.80px;background:#595c60;"></div>
<div class="b" style="left:1640.50px;top:212.60px;width:3.50px;height:13.80px;background:#595c60;"></div>
<div class="b" style="left:1640.50px;top:232.20px;width:3.50px;height:13.80px;background:#595c60;"></div>
<div class="b" style="left:1640.50px;top:251.80px;width:3.50px;height:13.80px;background:#595c60;"></div>
<div class="b" style="left:1640.50px;top:318.20px;width:3.50px;height:13.80px;background:#595c60;"></div>
<div class="b" style="left:1640.50px;top:337.80px;width:3.50px;height:13.80px;background:#595c60;"></div>
<div class="b" style="left:1640.50px;top:357.40px;width:3.50px;height:13.80px;background:#595c60;"></div>
<div class="b" style="left:1640.50px;top:377.00px;width:3.50px;height:13.80px;background:#595c60;"></div>
<div class="b" style="left:1640.50px;top:396.60px;width:3.50px;height:13.80px;background:#595c60;"></div>
<div class="b" style="left:1640.50px;top:416.20px;width:3.50px;height:13.80px;background:#595c60;"></div>
<div class="b" style="left:1640.50px;top:435.80px;width:3.50px;height:13.80px;background:#595c60;"></div>
<div class="b" style="left:1640.50px;top:455.40px;width:3.50px;height:13.80px;background:#595c60;"></div>
<div class="b" style="left:1640.50px;top:475.00px;width:3.50px;height:13.80px;background:#595c60;"></div>
<div class="b" style="left:1640.50px;top:494.60px;width:3.50px;height:13.80px;background:#595c60;"></div>
<div class="b" style="left:1640.50px;top:514.20px;width:3.50px;height:13.80px;background:#595c60;"></div>
<div class="b" style="left:1640.50px;top:533.80px;width:3.50px;height:13.80px;background:#595c60;"></div>
<div class="b" style="left:1640.50px;top:572.00px;width:3.50px;height:13.80px;background:#595c60;"></div>
<div class="b" style="left:1640.50px;top:591.50px;width:3.50px;height:13.80px;background:#595c60;"></div>
<span class="t" style="left:7.22px;top:907.00px;font-size:11.05px;color:#cfd6de;transform:scaleX(0.8580);">DFLT</span>
<svg class="b" style="left:37.6px;top:908.5px" width="8" height="6"><path d="M1,1.5 L4,4.5 L7,1.5" fill="none" stroke="#8a97a5" stroke-width="1.1"/></svg>
<div class="b" style="left:56.30px;top:904.00px;width:1.00px;height:16.00px;background:#3a4a5c;"></div>
<div class="b" style="left:64px;top:902px;width:191.5px;height:21px;overflow:hidden"><span class="t" style="left:0.43px;top:5.00px;font-size:11.05px;color:#d6dce3;transform:scaleX(0.9591);">Herc_Cargo_With_Proper_CTLD_Examp</span></div>
<span class="t" style="left:268.46px;top:907.00px;font-size:11.05px;color:#e0e5ea;transform:scaleX(0.9215);">LAT</span>
<span class="t" style="left:299.34px;top:907.00px;font-size:11.05px;color:#d6dce3;transform:scaleX(1.0589);">N 42°14'45.23"</span>
<div class="b" style="left:385.00px;top:904.00px;width:1.00px;height:16.00px;background:#3a4a5c;"></div>
<span class="t" style="left:393.54px;top:907.00px;font-size:11.05px;color:#e0e5ea;transform:scaleX(0.9468);">LONG</span>
<span class="t" style="left:429.66px;top:907.00px;font-size:11.05px;color:#d6dce3;transform:scaleX(1.0387);">E 42°02'16.17"</span>
<div class="b" style="left:516.50px;top:904.00px;width:1.00px;height:16.00px;background:#3a4a5c;"></div>
<span class="t" style="left:534.98px;top:907.00px;font-size:11.05px;color:#e0e5ea;transform:scaleX(0.8307);">ALT</span>
<span class="t" style="left:565.44px;top:907.00px;font-size:11.05px;color:#d6dce3;transform:scaleX(1.0218);">43</span>
<div class="b" style="left:606.50px;top:904.00px;width:1.00px;height:16.00px;background:#3a4a5c;"></div>
<span class="t" style="left:628.39px;top:907.00px;font-size:11.05px;color:#d6dce3;transform:scaleX(0.8921);">PAN/SELECT</span>
<div class="b" style="left:703.20px;top:905.10px;width:27.20px;height:14.20px;background:#1f2a36;"></div>
<span class="t" style="left:706.44px;top:908.00px;font-size:10.47px;color:#d0d6dd;font-weight:bold;transform:scaleX(0.8785);">MAP</span>
<div class="b" style="left:739.20px;top:905.10px;width:27.20px;height:14.20px;background:#1f2a36;"></div>
<span class="t" style="left:743.54px;top:908.00px;font-size:10.47px;color:#d0d6dd;font-weight:bold;transform:scaleX(0.8773);">SAT</span>
<div class="b" style="left:774.20px;top:905.10px;width:27.80px;height:14.20px;background:#6aaee0;"></div>
<span class="t" style="left:779.12px;top:908.00px;font-size:10.47px;color:#0c1622;font-weight:bold;transform:scaleX(0.8763);">ALT</span>
<div class="b" style="left:831.20px;top:905.10px;width:27.30px;height:14.20px;background:#6aaee0;"></div>
<div class="b" style="left:867.00px;top:905.10px;width:27.30px;height:14.20px;background:#1f2a36;"></div>
<svg class="b" style="left:834px;top:906px" width="22" height="12"><path d="M3,3 h12 l-2,3 l2,3 h-12 l2,-3z" fill="#1a2a3a"/><circle cx="9" cy="6" r="2" fill="#c9d6e2"/><path d="M15,6 h5" stroke="#c34" stroke-width="1"/></svg>
<svg class="b" style="left:873px;top:905.5px" width="16" height="14"><circle cx="8" cy="7" r="5" fill="none" stroke="#c9d2db" stroke-width="1.2"/><path d="M8,4.5 v3 M3,2 l2,1.5 M13,2 l-2,1.5 M3,12 l2,-1.5 M13,12 l-2,-1.5" stroke="#c9d2db" stroke-width="1"/></svg>
<span class="t" style="left:1515.32px;top:908.00px;font-size:11.63px;color:#b9c1ca;transform:scaleX(0.9872);">25.02.2021 10:29:10</span>
</body></html>
